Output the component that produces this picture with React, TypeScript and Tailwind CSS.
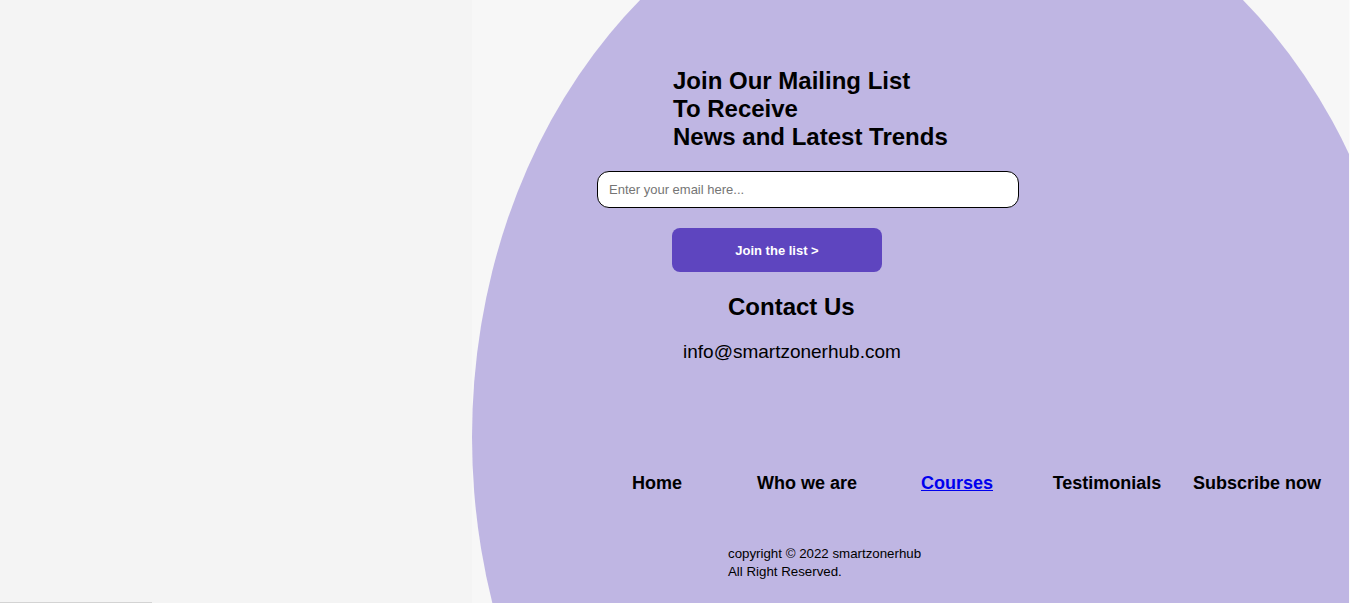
export default function App() {
  const links = ['Home', 'Who we are', 'Courses', 'Testimonials', 'Subscribe now'];

  return (
    <div className="flex h-[603px] w-full overflow-hidden font-['Liberation_Sans',Arial,sans-serif] text-black">
      {/* left blank panel */}
      <div className="flex w-[472px] shrink-0 flex-col bg-[#f4f4f4]">
        <div className="flex-1" />
        <div className="h-px w-[152px] bg-[#d3d3d3]" />
      </div>

      {/* footer / mailing section */}
      <section className="relative flex-1 overflow-hidden bg-[#f7f7f7]">
        {/* decorative blob behind the content */}
        <div className="absolute left-0 top-[-133px] h-[1140px] w-[939px] rounded-[50%] bg-[#bfb6e3]" />

        <div className="relative pt-[67px]">
          <h2 className="ml-[201px] text-[24px] font-bold leading-[28px]">
            Join Our Mailing List
            <br />
            To Receive
            <br />
            News and Latest Trends
          </h2>

          <input
            type="email"
            placeholder="Enter your email here..."
            className="mt-[20px] ml-[125px] block h-[37px] w-[422px] rounded-[12px] border border-black bg-white pl-[11px] text-[13px] outline-none placeholder:text-[#757575]"
          />

          <button className="mt-[20px] ml-[200px] block h-[44px] w-[210px] rounded-[8px] bg-[#5e45bf] pt-[2px] text-[13px] font-bold text-white">
            Join the list &gt;
          </button>

          <h2 className="mt-[21px] ml-[256px] text-[24px] font-bold leading-[28px]">Contact Us</h2>
          <p className="mt-[20px] ml-[211px] text-[19px] leading-[22px]">info@smartzonerhub.com</p>

          <nav className="mt-[110px] ml-[110px] flex">
            {links.map((l) => (
              <a
                key={l}
                href="#"
                className={
                  l === 'Courses'
                    ? 'w-[150px] shrink-0 text-center text-[18px] font-bold leading-[21px] text-[#0000ee] underline'
                    : 'w-[150px] shrink-0 text-center text-[18px] font-bold leading-[21px] text-black'
                }
              >
                {l}
              </a>
            ))}
          </nav>

          <p className="mt-[51px] ml-[256px] text-[13.3px] leading-[18px]">
            copyright © 2022 smartzonerhub
            <br />
            All Right Reserved.
          </p>
        </div>
      </section>
      <div className="w-px shrink-0 bg-[#fbfbfb]" />
    </div>
  );
}
